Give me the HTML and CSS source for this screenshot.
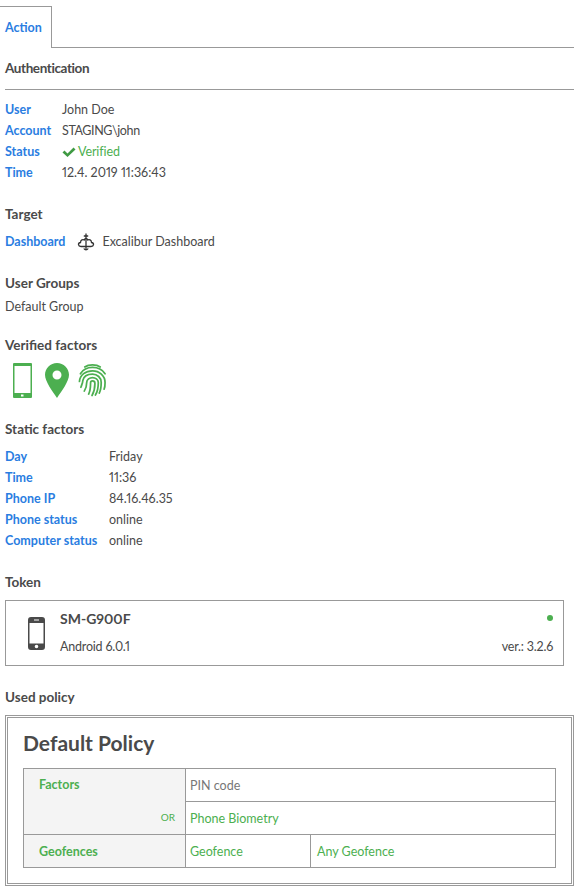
FILE: index.html
```html
<!DOCTYPE html>
<html lang="en">
<head>
    <meta charset="UTF-8">
    <meta name="viewport" content="width=device-width, initial-scale=1.0">
    <title>Action</title>
    <link rel="stylesheet" href="styles.css">
</head>
<body>
    <div class="tabs">
        <div class="tab">Action</div>
    </div>

    <h3 class="heading ruled">Authentication</h3>
    <div class="rows auth">
        <div class="label">User</div><div>John Doe</div>
        <div class="label">Account</div><div class="tight">STAGING\john</div>
        <div class="label">Status</div>
        <div class="verified">
            <svg class="check" viewBox="0 0 14 12"><path d="M.5 6.500l2-2 3 3L11.500 1.500l2 2L5.500 11z"/></svg>Verified
        </div>
        <div class="label">Time</div><div>12.4. 2019 11:36:43</div>
    </div>

    <h3 class="heading target-heading">Target</h3>
    <div class="target">
        <span class="label">Dashboard</span>
        <svg class="sword" viewBox="0 0 18 18">
            <path d="M4 13.500C1 13.500 .5 10 3.500 9.500C3.500 7 6 6 7.200 7C8 5 10 5 10.800 7C12 6 14.500 7 14.500 9.500C17.500 10 17 13.500 14 13.500H4"/>
            <path d="M9 .5V17.500M6.800 3H11.200M6.800 15.500C8 17.300 10 17.300 11.200 15.500"/>
        </svg>
        <span>Excalibur Dashboard</span>
    </div>

    <h3 class="heading groups-heading">User Groups</h3>
    <div class="groups">Default Group</div>

    <h3 class="heading factors-heading">Verified factors</h3>
    <div class="factors">
        <svg class="phone-icon" viewBox="0 0 19 35"><path fill-rule="evenodd" d="M1 0h17a1 1 0 0 1 1 1v33a1 1 0 0 1-1 1H1a1 1 0 0 1-1-1V1a1 1 0 0 1 1-1zm.5 3v27h16V3zM8 31.500v2h2.500v-2z"/></svg>
        <svg class="pin-icon" viewBox="0 0 24 35"><path fill-rule="evenodd" d="M12 0c6.600 0 12 5.200 12 11.800 0 6.700-7.500 16.700-12 23.200C7.500 28.500 0 18.500 0 11.800 0 5.200 5.400 0 12 0zm0 7.500a4.500 4.500 0 1 0 0 9 4.500 4.500 0 0 0 0-9z"/></svg>
        <svg class="finger-icon" viewBox="0 0 30 35">
            <path d="M7 4C11 1 19 1 23 4"/>
            <path d="M2.500 11C6 5.500 11 4.500 15 4.500C20 4.500 25 6.500 28 11"/>
            <path d="M1.500 19C2 12 8 8 15 8C22 8 28 13 28 20C28 23 28 25 27 27"/>
            <path d="M3 25C4 22 5 20 5 18C6 13 10 11.500 15 11.500C20 11.500 24 15 24 20C24 25 23.500 28 22 31"/>
            <path d="M6.500 29C8.500 26 9 22 9 20C9 17 12 15 15 15C18 15 21 17 21 20C21 25 20 30 18 33"/>
            <path d="M11 32C13 28 13 24 13 20.500C13 19 14 18.500 15 18.500C16.500 18.500 17.500 19.500 17.500 21C17.500 25 16.500 30 14.500 33.500"/>
        </svg>
    </div>

    <h3 class="heading static-heading">Static factors</h3>
    <div class="rows static">
        <div class="label">Day</div><div>Friday</div>
        <div class="label">Time</div><div>11:36</div>
        <div class="label">Phone IP</div><div>84.16.46.35</div>
        <div class="label">Phone status</div><div>online</div>
        <div class="label">Computer status</div><div>online</div>
    </div>

    <h3 class="heading token-heading">Token</h3>
    <div class="token">
        <svg class="token-phone" viewBox="0 0 17 33"><path fill-rule="evenodd" d="M3 0h11a3 3 0 0 1 3 3v27a3 3 0 0 1-3 3H3a3 3 0 0 1-3-3V3a3 3 0 0 1 3-3zM1.500 6v20.500h14V6zm7 21.700a1.800 1.800 0 1 0 0 3.600 1.800 1.800 0 0 0 0-3.600zM6 2.500v1h5v-1z"/></svg>
        <div class="token-info">
            <div class="token-name">SM-G900F</div>
            <div class="token-text">Android 6.0.1</div>
        </div>
        <div class="token-side">
            <span class="dot"></span>
            <div class="token-text">ver.: 3.2.6</div>
        </div>
    </div>

    <h3 class="heading policy-heading">Used policy</h3>
    <div class="policy">
        <h2 class="policy-title">Default Policy</h2>
        <table class="policy-table">
            <colgroup>
                <col class="col-name">
                <col class="col-first">
                <col>
            </colgroup>
            <tbody>
                <tr>
                    <th rowspan="2">
                        <div class="th-inner">
                            <span>Factors</span>
                            <span class="or">OR</span>
                        </div>
                    </th>
                    <td colspan="2" class="grey">PIN code</td>
                </tr>
                <tr>
                    <td colspan="2">Phone Biometry</td>
                </tr>
                <tr>
                    <th>Geofences</th>
                    <td>Geofence</td>
                    <td class="any">Any Geofence</td>
                </tr>
            </tbody>
        </table>
    </div>
</body>
</html>
```

FILE: styles.css
```css
body {
    margin: 0;
    padding: 6px 5px 0;
    font-family: Lato, "Open Sans", sans-serif;
    font-size: 12.5px;
    font-variant-numeric: proportional-nums;
    line-height: 21px;
    color: #4a4a4a;
    background: #ffffff;
}
.tabs {
    height: 41px;
    margin: 0 0 0 -5px;
    width: 574px;
    border-bottom: 1px solid #999;
}
.tab {
    width: 46px;
    height: 41px;
    line-height: 41px;
    padding-left: 5px;
    background: #fff;
    border-top: 1px solid #999;
    border-right: 1px solid #999;
    color: #2a7de1;
    font-weight: 700;
}
.heading {
    margin: 0;
    font-size: 13.5px;
    font-weight: 700;
    line-height: 21px;
    color: #4a4a4a;
}
.ruled {
    width: 569px;
    margin-top: 10px;
    padding-bottom: 10px;
    border-bottom: 1px solid #999;
    letter-spacing: -0.4px;
}
.label {
    color: #2a7de1;
    font-weight: 700;
}
.tight {
    letter-spacing: -0.4px;
}
.rows {
    display: grid;
    grid-auto-rows: 21px;
}
.auth {
    grid-template-columns: 57px 1fr;
    margin-top: 9px;
}
.verified {
    color: #4caf50;
    display: flex;
    align-items: center;
    letter-spacing: -0.1px;
}
.check {
    width: 14px;
    height: 12px;
    margin-right: 2px;
    fill: #3f9a43;
}
.target-heading {
    margin-top: 21px;
}
.target {
    display: flex;
    align-items: center;
    height: 21px;
    margin-top: 6px;
}
.sword {
    width: 18px;
    height: 18px;
    margin: 0 7px 0 12px;
    fill: none;
    stroke: #333;
    stroke-width: 1.300;
}
.groups-heading {
    margin-top: 21px;
}
.groups {
    margin-top: 2px;
}
.factors-heading {
    margin-top: 18px;
}
.factors {
    display: flex;
    align-items: flex-start;
    height: 35px;
    margin-top: 7px;
    padding-left: 8px;
}
.phone-icon {
    width: 19px;
    height: 35px;
    fill: #4caf50;
}
.pin-icon {
    width: 24px;
    height: 35px;
    margin-left: 13px;
    fill: #4caf50;
}
.finger-icon {
    width: 29px;
    height: 34px;
    margin-left: 9px;
    fill: none;
    stroke: #4caf50;
    stroke-width: 1.800;
    stroke-linecap: round;
}
.static-heading {
    margin-top: 21px;
}
.static {
    grid-template-columns: 104px 1fr;
    margin-top: 6px;
}
.token-heading {
    margin-top: 21px;
}
.token {
    display: flex;
    box-sizing: border-box;
    width: 559px;
    height: 66px;
    margin-top: 7px;
    padding: 7px 10px 8px 22px;
    border: 1px solid #999;
}
.token-phone {
    width: 17px;
    height: 33px;
    margin-top: 9px;
    fill: #4a4a4a;
}
.token-info {
    margin-left: 15px;
    flex: 1;
    display: flex;
    flex-direction: column;
    justify-content: space-between;
}
.token-name {
    font-size: 14px;
    font-weight: 700;
}
.token-text {
    letter-spacing: -0.2px;
}
.token-side {
    display: flex;
    flex-direction: column;
    justify-content: space-between;
    align-items: flex-end;
}
.dot {
    width: 6px;
    height: 6px;
    margin-top: 7px;
    border-radius: 50%;
    background: #4caf50;
}
.policy-heading {
    margin-top: 21px;
}
.policy {
    box-sizing: border-box;
    width: 569px;
    height: 171px;
    margin-top: 7px;
    padding: 10px 15px 0;
    border: 3px double #999;
}
.policy-title {
    margin: 0;
    font-size: 21px;
    font-weight: 700;
    line-height: 30px;
    color: #4a4a4a;
}
.policy-table {
    width: 533px;
    margin-top: 10px;
    border-collapse: collapse;
    table-layout: fixed;
}
.col-name {
    width: 162px;
}
.col-first {
    width: 125px;
}
.policy-table th, .policy-table td {
    height: 32px;
    padding: 0 0 0 4px;
    border: 1px solid #999;
    text-align: left;
    color: #4caf50;
    font-weight: 400;
}
.policy-table th {
    padding-left: 15px;
    background: #f4f4f4;
    font-weight: 700;
}
.policy-table td.grey {
    color: #777;
}
.policy-table td.any {
    padding-left: 6px;
}
.policy-table th[rowspan] {
    padding-right: 10px;
}
.th-inner {
    display: flex;
    flex-direction: column;
    height: 65px;
    box-sizing: border-box;
    padding-top: 5px;
}
.or {
    margin-top: 12px;
    font-size: 10px;
    font-weight: 400;
    text-align: right;
}
```
